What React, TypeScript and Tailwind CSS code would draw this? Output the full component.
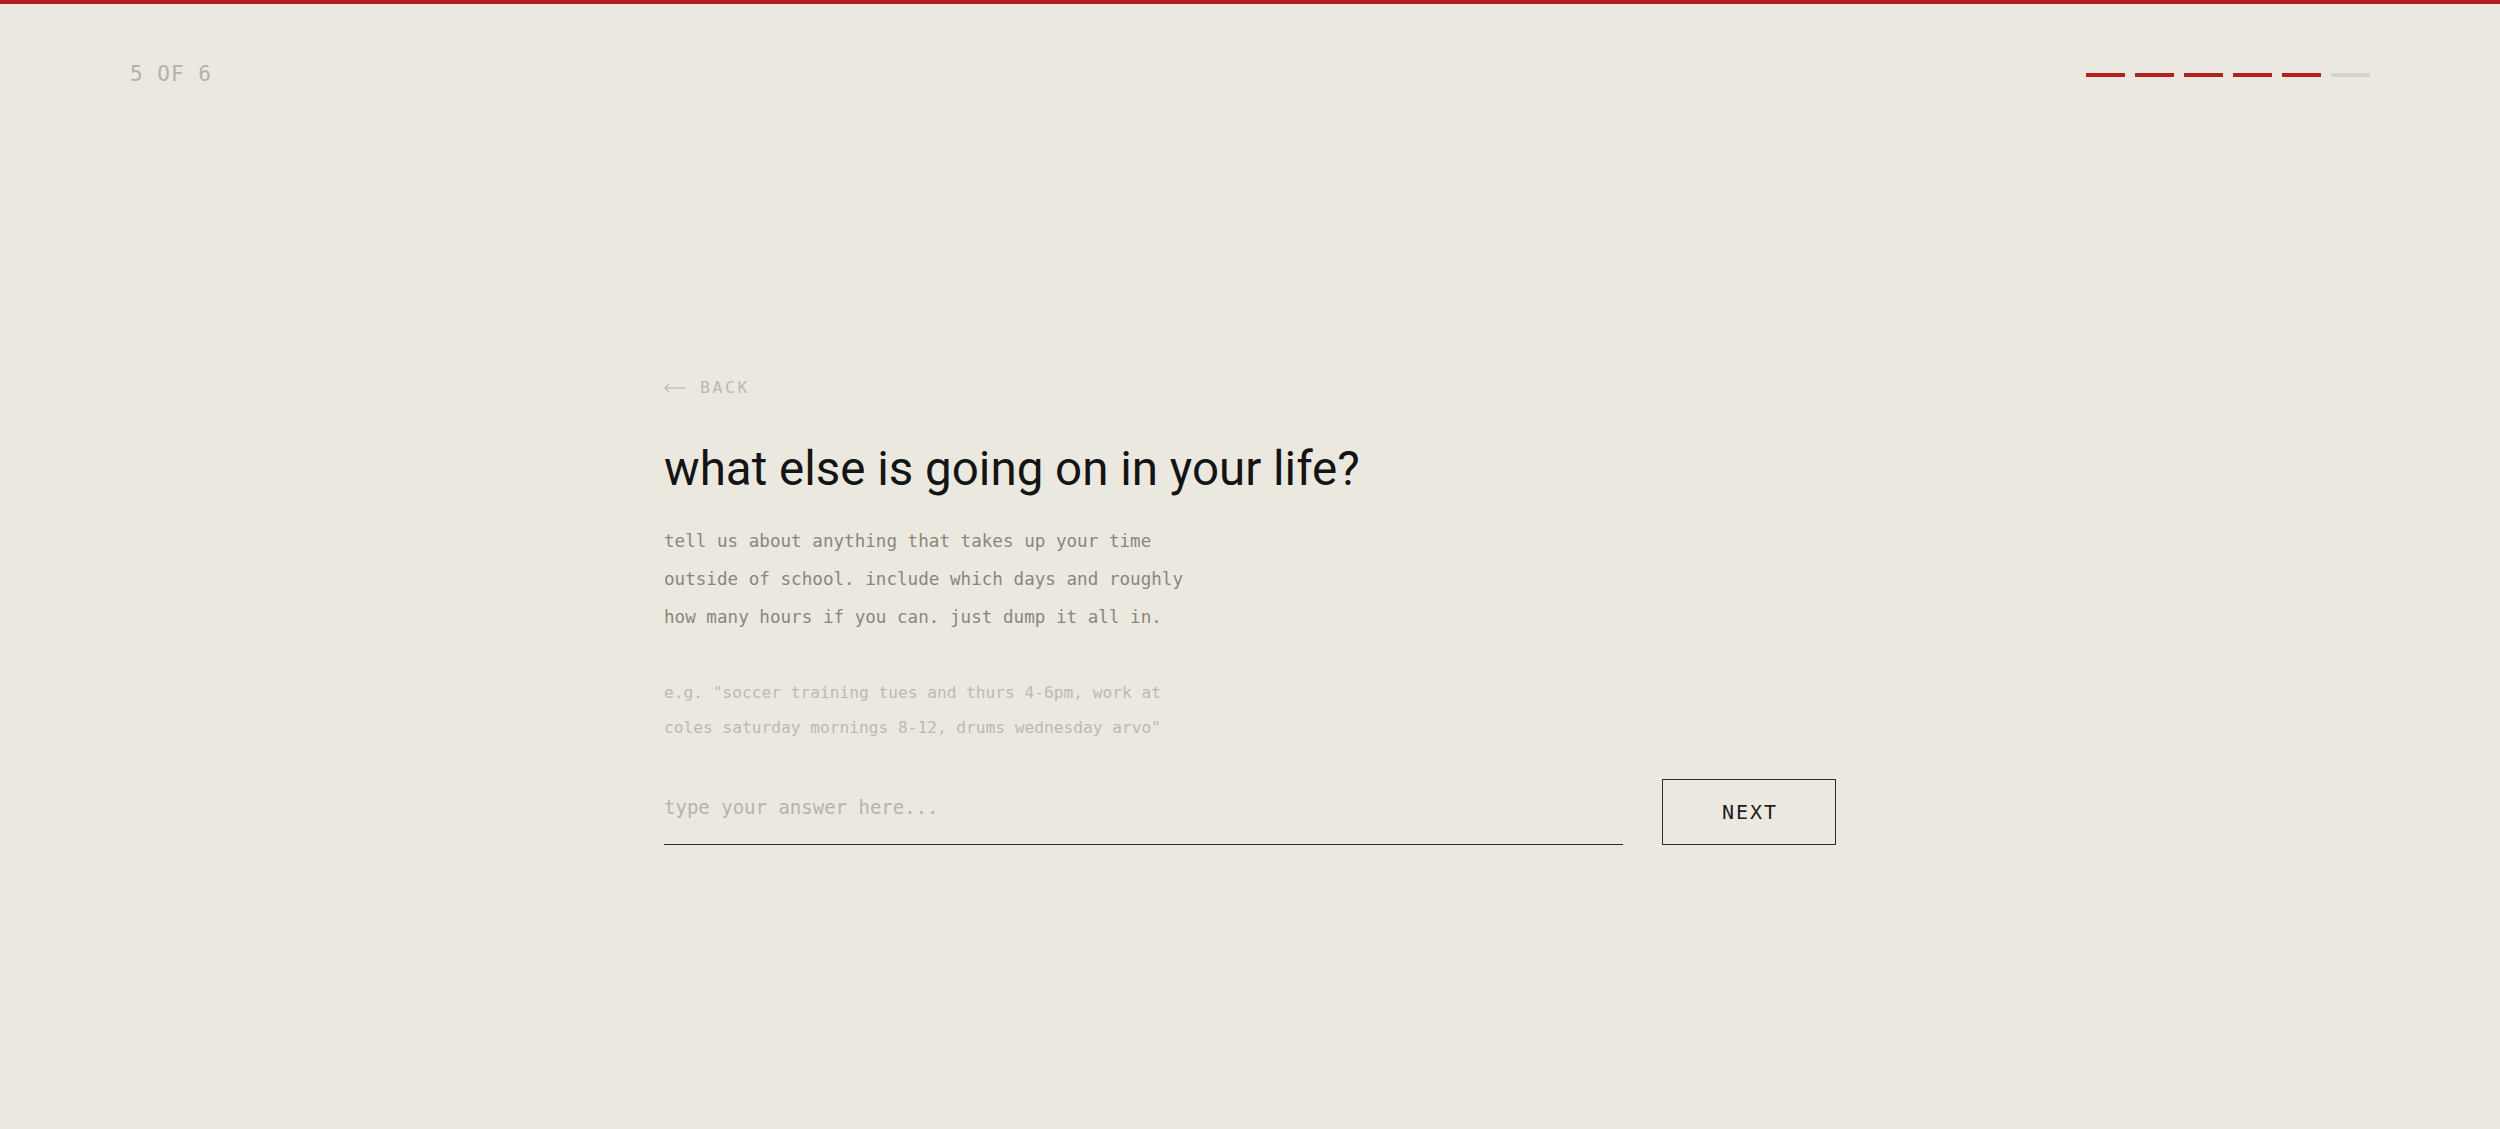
export default function App() {
  const mono = "font-['DejaVu_Sans_Mono','Liberation_Mono',monospace]";
  return (
    <div className="min-h-screen bg-[#ebe8e0] flex flex-col">
      <div className="h-1 bg-[#b21e1e]" />
      <header className="flex items-center justify-between px-[130px] pt-[60px]">
        <span className={`${mono} text-[21px] leading-[21px] tracking-[1px] text-[#b4b0a7]`}>5 OF 6</span>
        <div className="flex gap-[10px]">
          <div className="w-[39px] h-1 bg-[#b3201f]" />
          <div className="w-[39px] h-1 bg-[#b3201f]" />
          <div className="w-[39px] h-1 bg-[#b3201f]" />
          <div className="w-[39px] h-1 bg-[#b3201f]" />
          <div className="w-[39px] h-1 bg-[#b3201f]" />
          <div className="w-[39px] h-1 bg-[#d6d3cc]" />
        </div>
      </header>
      <main className="w-[1172px] mx-auto pt-[293px]">
        <button className="flex items-center gap-[14px] text-[#bcb8ae]">
          <svg width="22" height="10" viewBox="0 0 22 10" fill="none" stroke="currentColor" strokeWidth="1.2">
            <path d="M0.5 5 H22" />
            <path d="M5 1 L0.8 5 L5 9" />
          </svg>
          <span className={`${mono} text-[16.5px] leading-[20px] tracking-[2.6px]`}>BACK</span>
        </button>
        <h1 className="mt-[42px] font-['Roboto','Noto_Sans',sans-serif] text-[47.5px] leading-[58px] font-normal text-[#141414]">
          what else is going on in your life?
        </h1>
        <p className={`${mono} mt-[24px] text-[17.6px] leading-[38px] text-[#8a867e]`}>
          tell us about anything that takes up your time
          <br />
          outside of school. include which days and roughly
          <br />
          how many hours if you can. just dump it all in.
        </p>
        <p className={`${mono} mt-[39px] text-[16.2px] leading-[35px] text-[#bdb9b0]`}>
          e.g. "soccer training tues and thurs 4-6pm, work at
          <br />
          coles saturday mornings 8-12, drums wednesday arvo"
        </p>
        <div className="mt-[34px] flex items-end gap-[39px]">
          <input
            type="text"
            placeholder="type your answer here..."
            className={`${mono} flex-1 h-[66px] pb-[9px] bg-transparent border-b-[1.5px] border-[#2b2b29] outline-none text-[19px] text-[#1a1a1a] placeholder:text-[#b7b3aa]`}
          />
          <button className="w-[174px] h-[66px] border-[1.5px] border-[#2b2b29] flex items-center justify-center">
            <span className={`${mono} text-[20px] leading-[20px] tracking-[2px] text-[#1c1c1c] pl-[2px]`}>NEXT</span>
          </button>
        </div>
      </main>
    </div>
  );
}
